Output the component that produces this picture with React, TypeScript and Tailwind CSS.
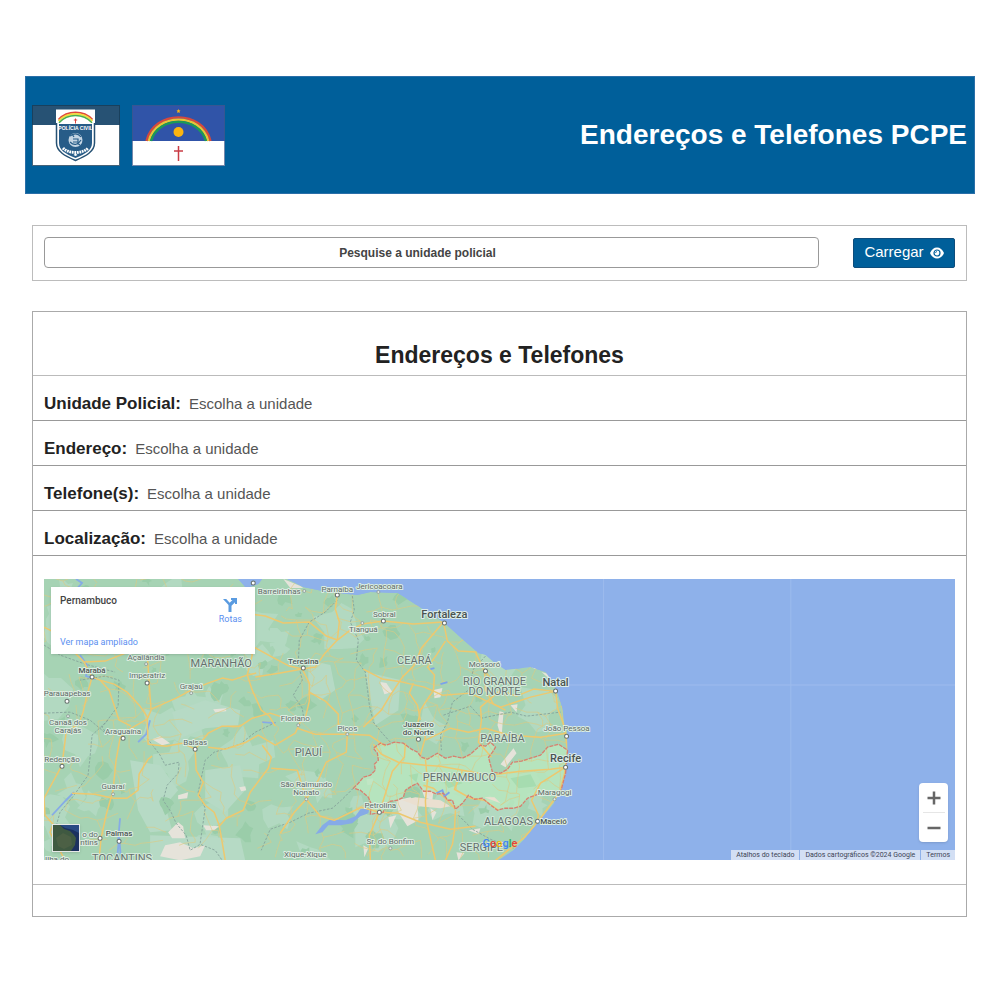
import React from "react";

const SANS = "font-['Liberation_Sans',Arial,sans-serif]";

function PoliceFlag() {
  return (
    <svg viewBox="0 0 88 61" className="h-[61px] w-[88px]" role="img" aria-label="Polícia Civil de Pernambuco">
      <rect width="88" height="61" fill="#fff" />
      <rect width="88" height="20" fill="#275274" />
      <rect x="0.5" y="0.5" width="87" height="60" fill="none" stroke="#173c58" strokeOpacity="0.8" />
      <path d="M24 4.500h39v33c0 9-9 14-19.500 18.500C33 51.500 24 46.500 24 37.500z" fill="#fff" />
      <path d="M24.500 18v20c0 8.500 8.500 13 19 17.500C54 51 62.500 46.500 62.500 38V18" fill="none" stroke="#275274" strokeWidth="1.500" />
      <path d="M27 19h33v19c0 7-6.500 11-16.500 15C33.500 49 27 45 27 38z" fill="#275c88" />
      <path d="M26.500 14.500c9-9.500 25-9.500 34 0" fill="none" stroke="#e0483c" strokeWidth="1.800" />
      <path d="M26.500 16c9-9.500 25-9.500 34 0" fill="none" stroke="#f2dc3c" strokeWidth="1.800" />
      <path d="M27 17.700c9-9.500 24-9.500 33 0" fill="none" stroke="#4bb04d" strokeWidth="1.500" />
      <path d="M43.500 13.500v5M41.800 15h3.400" stroke="#d8433f" strokeWidth="1" />
      <text x="43.500" y="25" textAnchor="middle" fontSize="5" fontWeight="700" fill="#fff" className={SANS}>POLÍCIA CIVIL</text>
      <circle cx="43.500" cy="35" r="7" fill="#c4d5e3" />
      <path d="M38 31c4-3 8-3 11 1M38 37c4 4 8 3 11-2M41 34h5v3h-5M40 29l2 3M48 40l-3-2" stroke="#275c88" strokeWidth="1.200" fill="none" />
      <path d="M31 43c5 6 20 6 25 0" fill="none" stroke="#fff" strokeWidth="2.800" strokeDasharray="1.800 0.700" />
      <path d="M41.500 50l2-1.500 2 1.500-2 1z" fill="#fff" />
    </svg>
  );
}

function StateFlag() {
  return (
    <svg viewBox="0 0 93 61" className="h-[61px] w-[93px]" role="img" aria-label="Bandeira de Pernambuco">
      <rect width="93" height="61" fill="#fff" />
      <rect width="93" height="36" fill="#3054a8" />
      <rect x="0.5" y="0.5" width="92" height="60" fill="none" stroke="#3b5787" strokeOpacity="0.700" />
      <g fill="none" strokeWidth="2.400">
        <path d="M14.500 36C22 4.500 71 4.500 78.500 36" stroke="#d6493c" />
        <path d="M16.800 36C24 7.500 69 7.500 76.200 36" stroke="#e8c637" />
        <path d="M19 36C26 10.500 67 10.500 74 36" stroke="#1c9a56" />
      </g>
      <circle cx="46.500" cy="27" r="5" fill="#fbb410" />
      <path d="M46.500 4l.6 1.300 1.400.2-1 1 .3 1.500-1.300-.7-1.300.7.300-1.500-1-1 1.400-.2z" fill="#fbb410" />
      <path d="M46.500 41v15M42 46h9" stroke="#c93c45" strokeWidth="1.500" />
    </svg>
  );
}

const LAND =
  "M44 579H238L246 588 258 584 262 579H287L303 587 327 592 357 595 370 592 397 593 413 603 443 622 463 640 478 653 485 655 493 662 505 670 530 667 545 672 552 682 557 693 562 708 564 725 567 731 567 750 565 773 560 792 552 805 537 823 523 840 513 850 498 860H44Z";

const STATE =
  "M353 788L358 783 363 777 370 775 375 770 374 764 378 760 377 753 373 748 380 743 386 745 394 742 403 743 411 749 417 752 421 757 427 759 437 753 445 758 453 756 462 758 470 754 480 745 485 746 490 742 495 747 492 752 488 757 492 772 500 773 507 769 512 762 521 761 530 758 540 755 547 747 558 744 567 750 565 773 560 792 538 794 532 796 527 798 520 806 513 808 504 808 497 810 489 804 482 798 474 799 468 795 462 803 455 809 452 800 447 800 443 793 436 794 430 791 423 791 417 783 411 786 405 790 403 797 397 800 390 801 385 804 383 812 370 814 371 804 368 797 360 790Z";

const ROADS = [
  "M44 627L52 631 70 648 84 662 92 677 100 680 114 684 127 692 140 706 148 718",
  "M92 677L87 695 83 712 78 726",
  "M84 662L105 661 128 652 147 650",
  "M100 680L109 690 113 702 119 720 131 726",
  "M147 650L149 683 151 710 147 719 148 744 166 746 182 743 195 749",
  "M147 719L126 731 120 738 116 760 113 790 106 815 101 838 99 860",
  "M151 709L176 698 191 690 208 683 222 678 232 680 247 675 256 673",
  "M247 675L252 690 261 710 269 716 275 726",
  "M247 675L252 655 244 630",
  "M195 749L196 770 203 782 198 795 205 805 214 812 219 825 222 842 225 860",
  "M195 749L208 733 222 726 240 726 252 718 270 713 285 718",
  "M208 747L225 749 246 742 258 735 275 745 295 733 300 722",
  "M262 745L271 757 268 768 250 792 243 810 226 818 219 826",
  "M65 860L50 832 53 824 45 815 44 798 62 765 66 733 80 722",
  "M72 793L95 794 113 798 127 798 138 790 139 774 148 759 152 756",
  "M250 614L265 616 283 623 309 622 326 636 337 640 350 630 362 624 383 621 413 624 443 622",
  "M337 595L335 609 339 622 337 640 324 654 315 667 302 669",
  "M250 645L272 657 289 666 302 669 280 673 255 677",
  "M302 669L309 683 309 701 305 718 296 720",
  "M309 692L325 701 338 714 338 724 347 734",
  "M443 622L421 648 414 665 402 677 390 695 381 710 363 727",
  "M297 728L315 734 347 734 369 735 385 746",
  "M443 622L447 641 458 651 475 652 484 671 500 690 516 696 533 689 553 691",
  "M445 641L436 655 427 667 434 675 433 690 420 710 417 725 425 737 420 755",
  "M363 669L382 679 402 682 424 687 442 695 470 693 484 700 500 707 530 697 555 691",
  "M413 683L409 693 417 705 420 720",
  "M555 691L557 708 563 724 565 736 567 751 564 773 559 792 540 818 524 837 495 860",
  "M484 670L485 690 493 704 505 710",
  "M373 744L381 754 398 762 425 765 440 766 462 770 490 775 520 771 550 769 565 767",
  "M425 759L427 780 425 801 426 820 430 838 435 860",
  "M405 743L404 757 392 771 387 787 382 803 379 812 369 835 370 860",
  "M347 734L346 752 326 762 318 780 306 799 294 812 280 833",
  "M306 799L320 816 334 820 361 807 379 812 398 813 420 822 450 829 475 826",
  "M271 768L297 770 306 799",
  "M425 740L450 728 468 732 485 728 509 735 540 737 566 733",
  "M455 810L454 830 452 844 445 860",
  "M462 770L454 789 470 798 484 800 498 810",
  "M565 767L540 783 531 800 538 815 536 822",
  "M455 809L447 800 433 788 423 785",
  "M500 690L480 707 481 720 478 742 491 757",
];

const STATE_LINES = [
  "M44 713L70 712 90 720 108 735 102 727 118 706 119 680 105 676 80 680",
  "M108 720L92 735 90 757 88 775 74 795 60 812 55 830",
  "M147 738L160 755 165 765 179 762 178 773 167 785 163 800 171 812 176 823 186 835 190 850 200 844 215 850 222 860",
  "M337 600L325 612 309 622 299 640 298 664 302 680 293 695 302 708 304 722",
  "M352 596L354 610 350 622 358 640 356 660 365 672 369 705 373 722 381 732 390 742",
  "M353 788L341 800 332 808 308 813 290 822 270 829 261 850",
  "M485 656L473 669 468 690 452 702 447 722 440 735 441 750",
  "M443 715L470 706 481 718 510 712 526 716 560 712",
  "M458 815L472 829 490 839 513 848",
  "M200 843L205 808 198 792 205 760 214 752 240 744 255 732 276 722",
  "M44 645L60 655 85 664 115 672",
];

const WATER = [
  "M76 579L82 583 73 593 69 600",
  "M80 655L87 665 86 676 96 679",
  "M150 720L146 734 138 742",
  "M52 815L66 800 74 792",
  "M117 860L119 836 121 860M118 840L120 818",
  "M262 722L275 723",
];

function seeded(seed: number) {
  let value = seed;
  return () => {
    value = (value * 16807) % 2147483647;
    return value / 2147483647;
  };
}

function buildMinorRoads() {
  const random = seeded(77);
  const step = 15;
  const columns = 37;
  const rows = 20;
  const points: number[][][] = [];
  for (let r = 0; r < rows; r++) {
    const line: number[][] = [];
    for (let c = 0; c < columns; c++) {
      line.push([Math.round(40 + c * step + (random() - 0.5) * 14), Math.round(576 + r * step + (random() - 0.5) * 14)]);
    }
    points.push(line);
  }
  let d = "";
  for (let r = 0; r < rows - 1; r++) {
    for (let c = 0; c < columns - 1; c++) {
      const [x, y] = points[r][c];
      const density = x > 300 ? 0.65 : 0.35;
      for (const [tx, ty] of [points[r][c + 1], points[r + 1][c]]) {
        if (random() < density) {
          const mx = Math.round((x + tx) / 2 + (random() - 0.5) * 6);
          const my = Math.round((y + ty) / 2 + (random() - 0.5) * 6);
          d += `M${x} ${y}L${mx} ${my} ${tx} ${ty}`;
        }
      }
    }
  }
  return d;
}

function buildPatches(seed: number, count: number, size: number) {
  const random = seeded(seed);
  let d = "";
  for (let i = 0; i < count; i++) {
    const cx = 44 + random() * 520;
    const cy = 579 + random() * 281;
    const r = size * (0.4 + random());
    for (let k = 0; k < 11; k++) {
      const a = (k / 11) * Math.PI * 2;
      const rr = r * (0.45 + random() * 0.9);
      d += `${k === 0 ? "M" : "L"}${Math.round(cx + Math.cos(a) * rr)} ${Math.round(cy + Math.sin(a) * rr)}`;
    }
    d += "Z";
  }
  return d;
}

const MINOR_ROADS = buildMinorRoads();
const LIGHT_PATCHES = buildPatches(41, 48, 18);
const DARK_PATCHES = buildPatches(909, 70, 7);

const PLATEAU =
  "M172 712L205 700 240 710 238 725 205 728 180 738ZM130 760L160 765 178 790 165 805 172 830 150 832 138 810ZM205 770L240 765 245 790 225 812 205 800ZM308 660L330 665 335 690 320 700 308 690ZM365 672L400 680 398 710 375 725ZM150 835L240 838 245 860 150 860Z";

const DRY =
  "M283 579L300 586 303 588 290 588ZM213 709L226 708 226 711 215 712ZM152 739L160 736 170 743 162 745ZM178 795L188 792 187 798 178 799ZM168 832L178 822 183 826 185 838 172 838ZM165 845L180 842 193 848 205 845 200 856 180 860 160 856ZM239 787L245 786 246 790 241 791ZM203 825L219 826 214 830 206 830ZM380 682L386 683 392 692 384 694ZM433 690L442 688 440 697 434 698ZM396 800L410 797 417 803 418 820 407 826 398 812ZM420 786L433 790 432 800 424 797ZM366 779L373 778 372 784 367 785ZM388 817L396 815 390 828ZM500 764L513 748 516 753 505 767ZM484 797L490 796 497 801 488 802ZM497 725L499 711 503 712 501 738ZM510 705L517 704 516 712ZM430 808L436 812 432 820ZM468 830L480 828 478 834ZM456 852L464 853 458 860ZM363 845L368 848 364 857ZM530 666L540 669 534 669ZM541 672L548 674 550 680Z";

type Place = [text: string, x: number, y: number];

const CITIES: Place[] = [
  ["Barreirinhas", 279, 594],
  ["Parnaíba", 337, 592],
  ["Jericoacoara", 379, 589],
  ["Sobral", 384, 617],
  ["Tianguá", 363, 632],
  ["Açailândia", 146, 660],
  ["Imperatriz", 147, 678],
  ["Grajaú", 191, 689],
  ["Parauapebas", 67, 696],
  ["Canaã dos", 68, 725],
  ["Carajás", 68, 733],
  ["Araguaína", 123, 734],
  ["Balsas", 195, 745],
  ["Redenção", 62, 762],
  ["Guaraí", 113, 789],
  ["Floriano", 295, 721],
  ["Picos", 347, 731],
  ["São Raimundo", 306, 787],
  ["Nonato", 306, 795],
  ["Petrolina", 380, 808],
  ["Sr. do Bonfim", 390, 844],
  ["Xique-Xique", 305, 857],
  ["Mossoró", 484, 667],
  ["João Pessoa", 566, 731],
  ["Maragogi", 554, 795],
  ["o do", 90, 837],
  ["ntins", 89, 845],
  ["Ilha do", 57, 862],
];

const BOLD_CITIES: Place[] = [
  ["Marabá", 92, 673],
  ["Teresina", 303, 664],
  ["Palmas", 119, 836],
  ["Maceió", 553, 824],
  ["Juazeiro", 418, 727],
  ["do Norte", 418, 735],
];

const CAPITALS: Place[] = [
  ["Fortaleza", 444, 618],
  ["Natal", 555, 686],
  ["Recife", 565, 762],
];

const STATES: Place[] = [
  ["MARANHÃO", 221, 667],
  ["CEARÁ", 414, 664],
  ["PIAUÍ", 308, 756],
  ["RIO GRANDE", 494, 685],
  ["DO NORTE", 494, 695],
  ["PARAÍBA", 502, 742],
  ["PERNAMBUCO", 459, 781],
  ["ALAGOAS", 508, 825],
  ["SERGIPE", 481, 851],
  ["TOCANTINS", 122, 862],
];

const MARKERS: [number, number][] = [
  [253, 583], [337, 595], [383, 621], [444, 623], [92, 677], [147, 683],
  [67, 701], [123, 738], [195, 749], [62, 766], [100, 838], [119, 841], [303, 668],
  [379, 812], [418, 739], [485, 671], [555, 691], [566, 736], [565, 767], [537, 821],
];

const SMALL_MARKERS: [number, number][] = [
  [304, 591], [378, 592], [362, 623], [146, 664], [191, 693], [68, 716], [113, 794], [298, 725], [347, 734],
  [306, 799], [390, 848], [554, 799],
];

function Labels({ places, className, fill, halo }: { places: Place[]; className: string; fill: string; halo: string }) {
  return (
    <g className={className} fill={fill} stroke={halo} strokeWidth="2" strokeLinejoin="round" paintOrder="stroke" textAnchor="middle">
      {places.map(([text, x, y]) => (
        <text key={text} x={x} y={y}>{text}</text>
      ))}
    </g>
  );
}

function MapDrawing() {
  return (
    <svg
      viewBox="44 579 910 281"
      preserveAspectRatio="xMinYMin slice"
      className="block h-[281px] w-full font-[Roboto,sans-serif]"
      role="img"
      aria-label="Mapa de Pernambuco"
    >
      <defs>
        <clipPath id="land"><path d={LAND} /></clipPath>
      </defs>
      <rect x="44" y="579" width="910" height="281" fill="#8eb1ea" />
      <path d="M603 579V860M790 579V860M540 685H954" stroke="#9dbbed" strokeWidth="1" />
      <g clipPath="url(#land)">
        <path d={LAND} fill="#a6d3b4" />
        <path d={LIGHT_PATCHES} fill="#b2d9c1" />
        <path d={PLATEAU} fill="#b6dac5" />
        <path d={DARK_PATCHES} fill="#9acda9" />
        <path d={DRY} fill="#e6e3da" />
        <path d={STATE} fill="#b9e6c0" fillOpacity="0.85" />
        <path d="M440 777L452 772 462 783 448 788ZM510 778L530 774 536 786 518 788ZM408 775L418 773 416 782Z" fill="#a6dcb0" />
        <path d="M402 800L415 797 440 800 450 806 440 808 418 806ZM484 797L494 797 500 803ZM424 790L434 792 430 797Z" fill="#eadfd0" />
        <path d={MINOR_ROADS} fill="none" stroke="#dccb83" strokeWidth="0.900" strokeOpacity="0.700" />
        {STATE_LINES.map((d) => (
          <path key={d} d={d} fill="none" stroke="#86a39b" strokeWidth="0.900" strokeDasharray="2.500 1.500" />
        ))}
        {WATER.map((d) => (
          <path key={d} d={d} fill="none" stroke="#86abe6" strokeWidth="1.800" />
        ))}
        <path d="M315 834L322 825 330 819 345 820 355 816 360 809 369 808 368 813 360 816 352 823 340 825 328 825 322 832Z" fill="#86abe6" />
        {ROADS.map((d) => (
          <path key={d} d={d} fill="none" stroke="#edc86f" strokeWidth="1.500" strokeLinejoin="round" />
        ))}
        <path d="M436 793L442 790 444 796 449 792M430 669L434 668M440 684L447 682" fill="none" stroke="#7ba2ea" strokeWidth="1.800" />
      </g>
      <path d={STATE} fill="none" stroke="#d8806f" strokeWidth="1.300" strokeDasharray="4 1" strokeLinejoin="round" />
      <g fill="#fff" stroke="#68726e" strokeWidth="1">
        {MARKERS.map(([x, y]) => (
          <circle key={`${x}-${y}`} cx={x} cy={y} r="2" />
        ))}
      </g>
      <g fill="#dfe9e4" stroke="#8b9994" strokeWidth="0.800">
        {SMALL_MARKERS.map(([x, y]) => (
          <circle key={`${x}-${y}`} cx={x} cy={y} r="1.500" />
        ))}
      </g>
      <Labels places={CITIES} className="text-[8px]" fill="#606b68" halo="#dcede1" />
      <Labels places={BOLD_CITIES} className="text-[8px] font-medium" fill="#4e5755" halo="#dcede1" />
      <Labels places={STATES} className="text-[11px]" fill="#66716e" halo="#d3e9da" />
      <Labels places={CAPITALS} className="text-[11px] font-medium" fill="#4a5351" halo="#dcede9" />
      <text x="482" y="847" className="text-[11px] font-medium">
        <tspan fill="#4285f4">G</tspan>
        <tspan fill="#ea4335">o</tspan>
        <tspan fill="#fbbc05">o</tspan>
        <tspan fill="#4285f4">g</tspan>
        <tspan fill="#34a853">l</tspan>
        <tspan fill="#ea4335">e</tspan>
      </text>
    </svg>
  );
}

function LocationMap() {
  return (
    <div className="relative overflow-hidden font-[Roboto,sans-serif]">
      <MapDrawing />
      <div className="absolute left-[7px] top-2 flex h-[67px] w-[204px] justify-between bg-white px-[9px] pb-1.5 pt-2 shadow">
        <div className="flex flex-col justify-between">
          <p className="text-[10px] font-medium leading-3 text-[#444]">Pernambuco</p>
          <a href="#mapa" className="text-[9px] leading-3 text-[#5a8ff0]">Ver mapa ampliado</a>
        </div>
        <a href="#rotas" className="flex flex-col items-center px-1 text-[9px] leading-3 text-[#5a8ff0]">
          <svg viewBox="0 0 16 16" className="mt-0.5 h-4 w-4" aria-hidden="true">
            <path d="M1 2h3.200l3.500 3.800L10.500 3H9V1h6v6h-2V5.300L9.500 8.700V15h-3V8z" fill="#5a9be0" />
          </svg>
          <span>Rotas</span>
        </a>
      </div>
      <button type="button" aria-label="Mostrar imagens de satélite" className="absolute bottom-2 left-2 h-7 w-7 overflow-hidden border border-[#e5e8e6] shadow">
        <svg viewBox="0 0 26 26" className="h-full w-full" aria-hidden="true">
          <rect width="26" height="26" fill="#1c315f" />
          <path d="M7 0h19v8L20 5 12 3z" fill="#294a83" />
          <path d="M0 0h7l4 4 6 2 4 4 2 3-1 7-4 6H0z" fill="#3f5941" />
          <path d="M3 13l7-5 8 4 1 8-8 4-6-3z" fill="#4c6045" />
        </svg>
      </button>
      <div className="absolute bottom-[18px] right-[7px] flex w-[29px] flex-col items-center rounded-sm bg-white text-[#666] shadow">
        <button type="button" aria-label="Aumentar o zoom" className="flex h-[29px] w-full items-center justify-center">
          <svg viewBox="0 0 14 14" className="h-3.5 w-3.5" aria-hidden="true">
            <path d="M7 0.500v13M0.500 7h13" stroke="currentColor" strokeWidth="2.500" />
          </svg>
        </button>
        <span className="h-px w-[22px] bg-[#e6e6e6]" />
        <button type="button" aria-label="Diminuir o zoom" className="flex h-[29px] w-full items-center justify-center">
          <svg viewBox="0 0 14 14" className="h-3.5 w-3.5" aria-hidden="true">
            <path d="M0.500 7h13" stroke="currentColor" strokeWidth="2.500" />
          </svg>
        </button>
      </div>
      <div className="absolute bottom-0 right-0 flex gap-px text-[7px] leading-[10px] text-[#3c4454]">
        <button type="button" className="bg-[#d3dff4] px-[5px]">Atalhos do teclado</button>
        <span className="bg-[#d3dff4] px-[5px]">Dados cartográficos ©2024 Google</span>
        <a href="#termos" className="bg-[#d3dff4] px-[5px]">Termos</a>
      </div>
    </div>
  );
}

const FIELDS = ["Unidade Policial:", "Endereço:", "Telefone(s):", "Localização:"];

export default function App() {
  return (
    <div className={`min-h-screen bg-white px-[25px] py-[76px] text-[#222] ${SANS}`}>
      <header className="flex h-[118px] items-center justify-between border border-[#2a6fa8] bg-[#005f9a] pl-1.5 pr-[7px]">
        <div className="flex gap-3">
          <PoliceFlag />
          <StateFlag />
        </div>
        <h1 className="text-[28px] font-bold leading-8 text-white">Endereços e Telefones PCPE</h1>
      </header>

      <main className="pl-[7px] pr-2">
        <form
          className="mt-[31px] flex items-center gap-[34px] border border-[#bcbcbc] px-[11px] pb-3 pt-[11px]"
          onSubmit={(event) => event.preventDefault()}
        >
          <input
            type="text"
            aria-label="Pesquise a unidade policial"
            placeholder="Pesquise a unidade policial"
            className="h-[31px] min-w-0 flex-1 rounded-sm border border-[#999] bg-white pr-7 text-center text-[12px] font-bold placeholder:text-[#444]"
          />
          <button
            type="submit"
            className="flex h-[30px] w-[102px] items-center justify-center gap-1.5 rounded-xs border border-[#0d4d7c] bg-[#005f9a] text-[15px] text-white"
          >
            Carregar
            <svg viewBox="0 0 14 12" className="h-3 w-3.5" aria-hidden="true">
              <path d="M0 6C1.500 2.500 4 0.500 7 0.500S12.500 2.500 14 6C12.500 9.500 10 11.500 7 11.500S1.500 9.500 0 6z" fill="currentColor" />
              <circle cx="7" cy="6" r="3" fill="none" stroke="#005f9a" strokeWidth="1.200" />
              <path d="M5.500 6A1.500 1.500 0 0 1 7 4.500" fill="none" stroke="#005f9a" strokeWidth="0.800" />
            </svg>
          </button>
        </form>

        <section className="mt-[30px] border border-[#aaa]">
          <h2 className="border-b border-[#bbb] pb-[6px] pt-[29px] text-center text-[23px] font-bold leading-7">
            Endereços e Telefones
          </h2>
          {FIELDS.map((label) => (
            <p key={label} className="flex items-baseline gap-2 border-b border-[#999] px-[11px] pb-1 pt-4 leading-6">
              <strong className="text-[17px] font-bold">{label}</strong>
              <span className="text-[15px] text-[#555]">Escolha a unidade</span>
            </p>
          ))}
          <div className="border-b border-[#bbb] px-[11px] pb-6 pt-[23px]">
            <LocationMap />
          </div>
          <div className="h-[31px]" />
        </section>
      </main>
    </div>
  );
}
